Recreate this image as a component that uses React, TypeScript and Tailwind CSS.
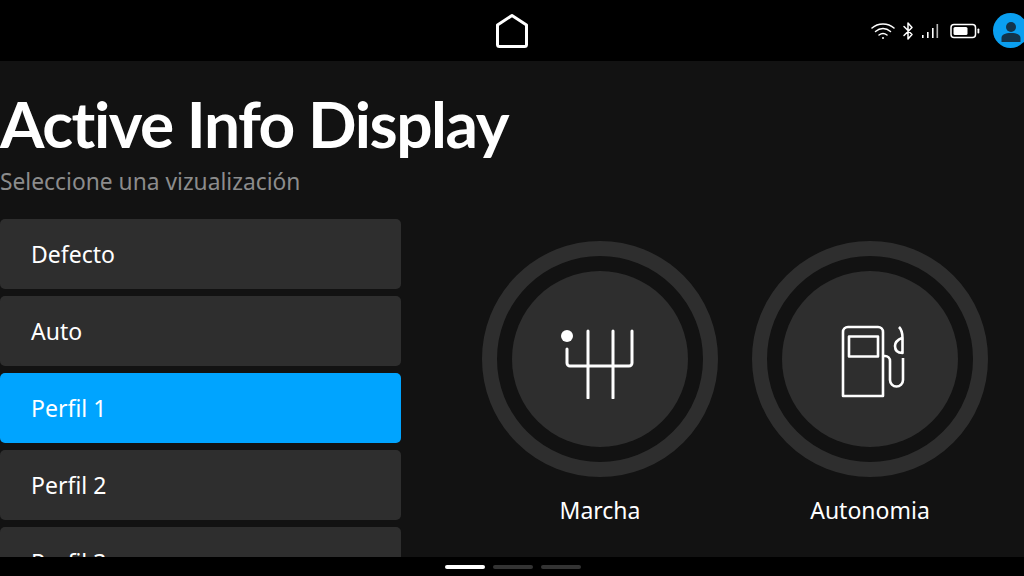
import React from "react";

const rows = ["Defecto", "Auto", "Perfil 1", "Perfil 2", "Perfil 3"];

function Home() {
  return (
    <svg width="36" height="38" viewBox="0 0 36 38" fill="none" stroke="white" strokeWidth="3" strokeLinejoin="round">
      <path d="M18 3.5 L32.5 13 V32.5 a2 2 0 0 1 -2 2 H5.5 a2 2 0 0 1 -2 -2 V13 Z" />
    </svg>
  );
}

function Status() {
  return (
    <div className="flex items-center">
      <svg width="24" height="18" viewBox="0 0 24 18" fill="none" stroke="white" strokeWidth="1.5" strokeLinecap="round">
        <path d="M1 6 C7 0.5 17 0.5 23 6" />
        <path d="M4.5 9.5 C9 5.5 15 5.5 19.5 9.5" />
        <path d="M8 13 C10.5 11 13.5 11 16 13" />
        <circle cx="12" cy="16" r="1" fill="white" stroke="none" />
      </svg>
      <svg className="ml-[6px]" width="14" height="20" viewBox="0 0 14 20" fill="none" stroke="white" strokeWidth="1.5" strokeLinejoin="round" strokeLinecap="round">
        <path d="M3 5.5 L11 13.5 L7 18 V2 L11 6.5 L3 14.5" />
      </svg>
      <svg className="ml-[6px]" width="18" height="16" viewBox="0 0 18 16" fill="white">
        <rect x="1" y="12" width="1.6" height="3" />
        <rect x="6" y="9" width="1.6" height="6" />
        <rect x="11" y="5" width="1.6" height="10" />
        <rect x="15.5" y="1" width="1.6" height="14" fill="#b5b5b5" />
      </svg>
      <svg className="ml-[11px]" width="30" height="16" viewBox="0 0 30 16" fill="none">
        <rect x="1" y="1.5" width="24.5" height="13" rx="3" stroke="white" strokeWidth="1.5" />
        <rect x="3.5" y="4" width="14" height="8" rx="1.5" fill="white" />
        <rect x="27.5" y="5.5" width="1.8" height="5" rx="0.8" fill="white" />
      </svg>
      <div className="ml-[13px] mr-[-4px] flex h-[35px] w-[35px] items-center justify-center overflow-hidden rounded-full bg-[#0a9ff0]">
        <svg width="24" height="24" viewBox="0 0 24 24" fill="#13344a">
          <circle cx="12" cy="8" r="5" />
          <path d="M2.5 23 V19 C2.5 15.5 6 14 12 14 C18 14 21.5 15.5 21.5 19 V23 Z" />
        </svg>
      </div>
    </div>
  );
}

function Gear() {
  return (
    <svg width="80" height="80" viewBox="0 0 80 80" fill="none" stroke="white" strokeWidth="3" strokeLinecap="round" strokeLinejoin="round">
      <circle cx="7" cy="17" r="6" fill="white" stroke="none" />
      <path d="M28 12 V79 M53 12 V79" />
      <path d="M7 30 V44 a3 3 0 0 0 3 3 H69 a3 3 0 0 0 3 -3 V12" />
    </svg>
  );
}

function Pump() {
  return (
    <svg width="80" height="80" viewBox="0 0 80 80" fill="none" stroke="white" strokeWidth="2.6" strokeLinejoin="round">
      <path d="M13 77 V13 a5 5 0 0 1 5 -5 H48 a5 5 0 0 1 5 5 V77 Z" />
      <rect x="19" y="17.5" width="29" height="20" />
      <path d="M53 37 H55 a5 5 0 0 1 5 5 V61 a6.5 6.5 0 0 0 13 0 V39" />
      <path d="M69 8 C72 11 72.5 15 72.5 19 V34 C67 34 65 31 65 27 C65 23 67 21 72 19" />
    </svg>
  );
}

function Dial({ label, children }: { label: string; children: React.ReactNode }) {
  return (
    <div className="flex w-[236px] flex-col items-center">
      <div className="flex h-[236px] w-[236px] items-center justify-center rounded-full border-[15px] border-[#2e2e2e]">
        <div className="flex h-[176px] w-[176px] shrink-0 items-center justify-center rounded-full bg-[#2e2e2e]">{children}</div>
      </div>
      <div className="mt-[17px] text-[23px] leading-[32px] text-white">{label}</div>
    </div>
  );
}

export default function App() {
  return (
    <div className="flex h-[576px] w-[1024px] flex-col overflow-hidden bg-black font-['Noto_Sans',sans-serif]">
      <header className="grid h-[61px] shrink-0 grid-cols-[1fr_auto_1fr] items-center bg-black">
        <div />
        <Home />
        <div className="flex justify-end"><Status /></div>
      </header>
      <main className="flex min-h-0 flex-1 flex-col overflow-hidden bg-[#121212]">
        <h1 className="mt-[23px] font-['Lato',sans-serif] text-[64px] leading-[80px] font-bold tracking-[-1.45px] whitespace-nowrap text-white">Active Info Display</h1>
        <p className="mt-[2px] text-[22.8px] leading-[32px] text-[#8c8c8c]">Seleccione una vizualización</p>
        <div className="mt-[21px] flex min-h-0 flex-1">
          <ul className="flex w-[401px] shrink-0 flex-col gap-[7px]">
            {rows.map((r) => (
              <li
                key={r}
                className={`flex h-[70px] shrink-0 items-center rounded-[5px] pl-[31px] text-[23px] text-white ${r === "Perfil 1" ? "bg-[#00a4ff]" : "bg-[#2e2e2e]"}`}
              >
                {r}
              </li>
            ))}
          </ul>
          <div className="ml-[81px] flex gap-[34px] pt-[22px]">
            <Dial label="Marcha"><Gear /></Dial>
            <Dial label="Autonomia"><Pump /></Dial>
          </div>
        </div>
      </main>
      <footer className="flex h-[19px] shrink-0 items-center justify-center gap-[8px] bg-black pl-[2px]">
        <span className="h-[4px] w-[40px] rounded-full bg-white" />
        <span className="h-[4px] w-[40px] rounded-full bg-[#333333]" />
        <span className="h-[4px] w-[40px] rounded-full bg-[#333333]" />
      </footer>
    </div>
  );
}
